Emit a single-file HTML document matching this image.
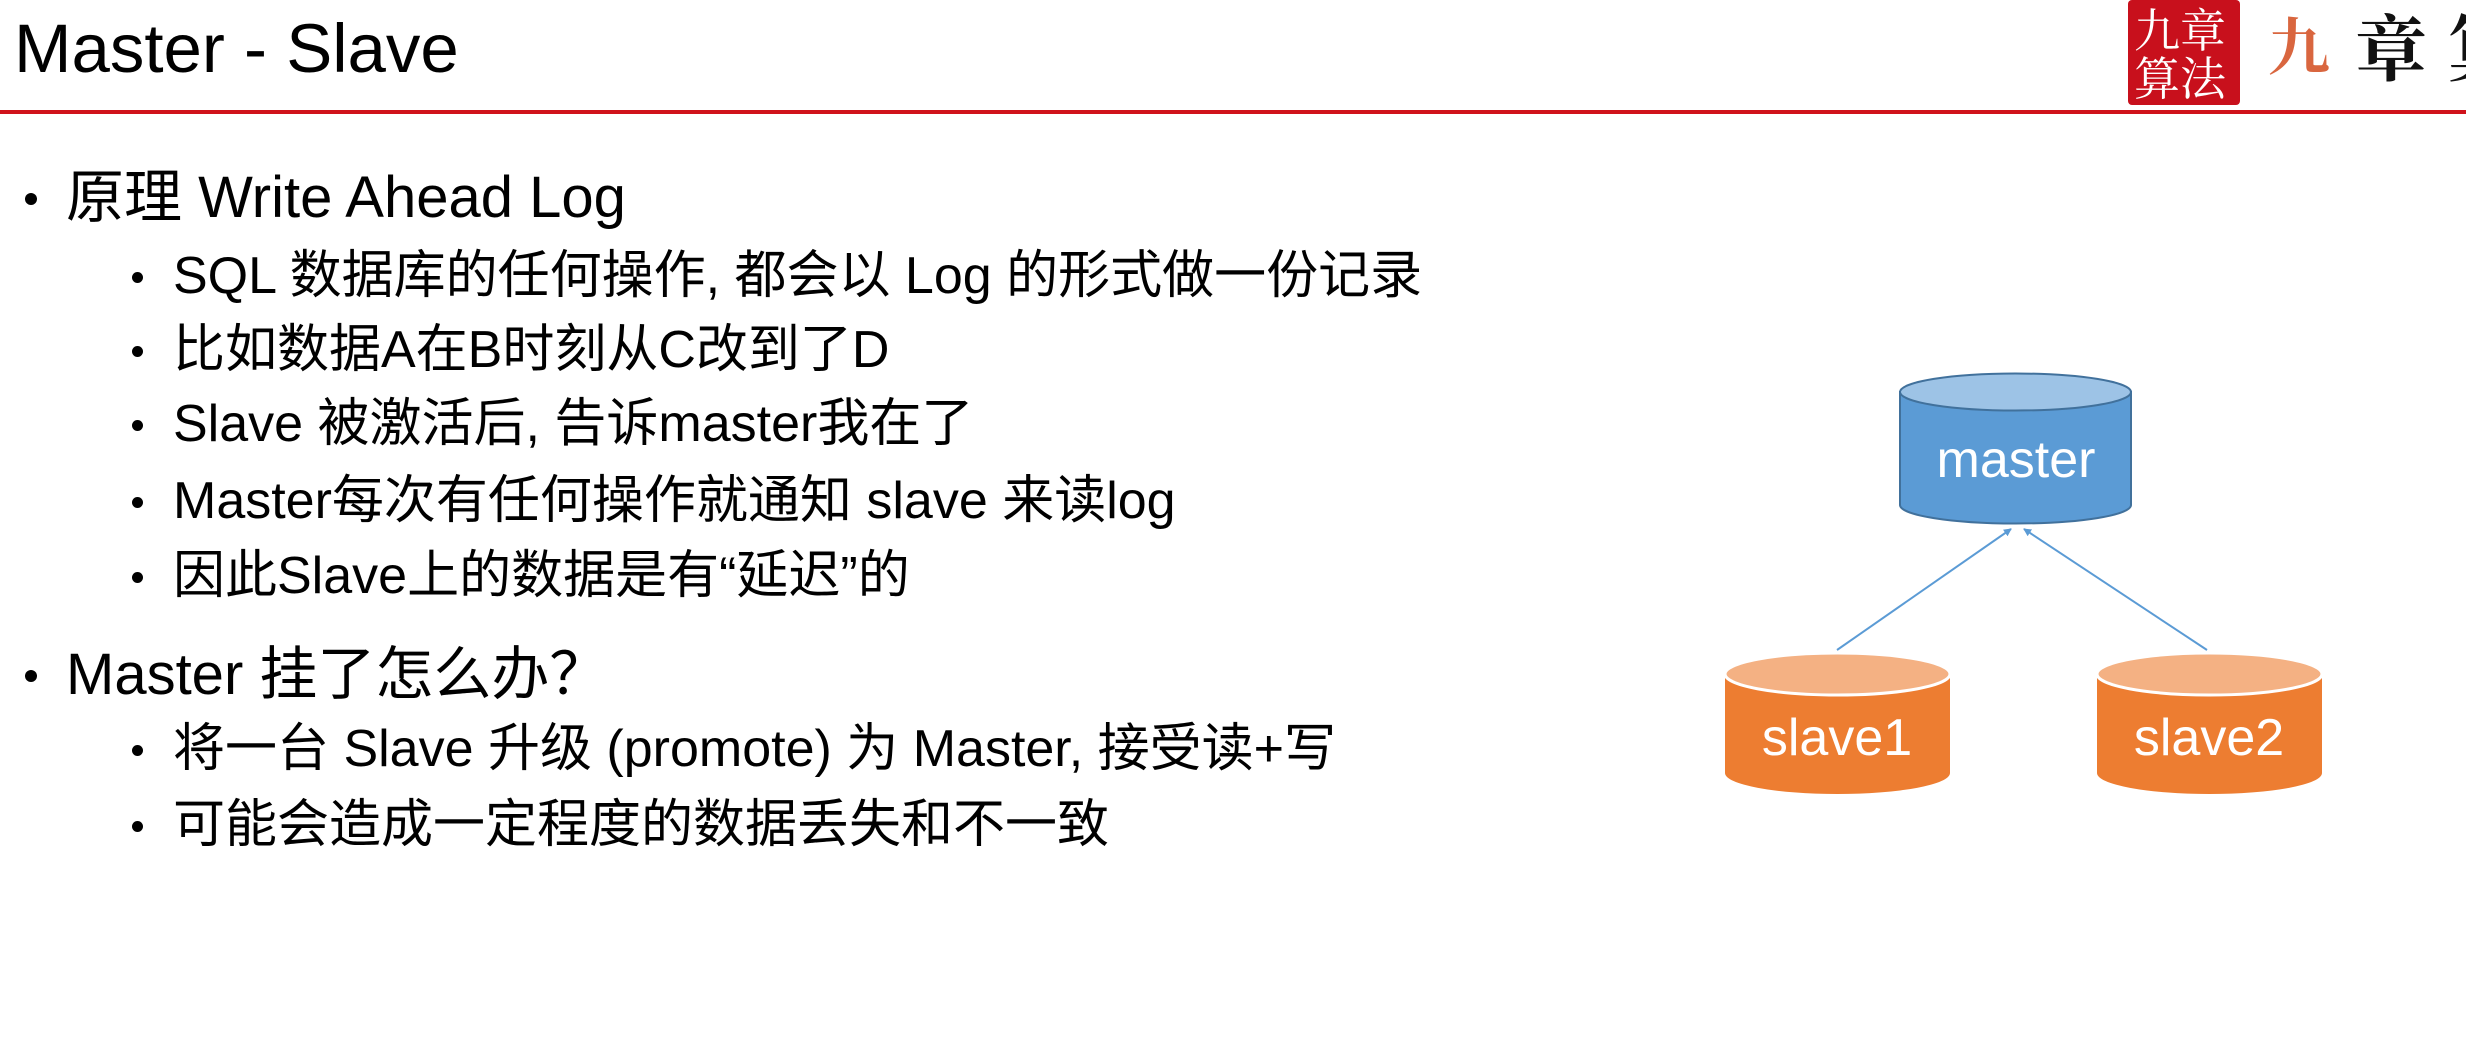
<!DOCTYPE html>
<html><head><meta charset="utf-8"><style>
html,body{margin:0;padding:0;background:#fff;}
body{width:2466px;height:1042px;position:relative;overflow:hidden;font-family:"Liberation Sans","Noto Sans CJK SC",sans-serif;color:#000;}
.t{position:absolute;white-space:nowrap;line-height:1;}
.title{left:14px;top:14px;font-size:69px;}
.l1{font-size:58px;left:66px;}
.l2{font-size:52px;left:173px;}
.b{position:absolute;border-radius:50%;background:#000;}
</style></head><body>
<div class="t title">Master - Slave</div>
<div style="position:absolute;left:0;top:110px;width:2466px;height:4px;background:#d0121b;"></div>

<div style="position:absolute;left:2128px;top:0;width:112px;height:105px;background:#c8101c;border-radius:4px;"></div>
<div class="t" style="left:2134px;top:4px;font-size:46px;color:#fff;font-family:'Noto Serif CJK SC',serif;line-height:48px;width:100px;">九章<br>算法</div>
<div class="t" style="left:2268px;top:12px;font-size:62px;color:#d9663f;font-family:'Noto Serif CJK SC',serif;font-weight:bold;">九</div>
<div class="t" style="left:2355px;top:8px;font-size:72px;color:#111;font-family:'Noto Serif CJK SC',serif;font-weight:bold;">章</div>
<div class="t" style="left:2448px;top:8px;font-size:72px;color:#111;font-family:'Noto Serif CJK SC',serif;font-weight:bold;">算</div>

<div class="b" style="left:25px;top:193px;width:12px;height:12px;"></div>
<div class="t l1" style="top:169px;">原理 Write Ahead Log</div>

<div class="b" style="left:132px;top:272px;width:11px;height:11px;"></div>
<div class="t l2" style="top:250px;">SQL 数据库的任何操作, 都会以 Log 的形式做一份记录</div>
<div class="b" style="left:132px;top:346px;width:11px;height:11px;"></div>
<div class="t l2" style="top:324px;">比如数据A在B时刻从C改到了D</div>
<div class="b" style="left:132px;top:420px;width:11px;height:11px;"></div>
<div class="t l2" style="top:398px;">Slave 被激活后, 告诉master我在了</div>
<div class="b" style="left:132px;top:497px;width:11px;height:11px;"></div>
<div class="t l2" style="top:475px;">Master每次有任何操作就通知 slave 来读log</div>
<div class="b" style="left:132px;top:572px;width:11px;height:11px;"></div>
<div class="t l2" style="top:550px;">因此Slave上的数据是有“延迟”的</div>

<div class="b" style="left:25px;top:670px;width:12px;height:12px;"></div>
<div class="t l1" style="top:646px;">Master 挂了怎么办？</div>
<div class="b" style="left:132px;top:745px;width:11px;height:11px;"></div>
<div class="t l2" style="top:723px;">将一台 Slave 升级 (promote) 为 Master, 接受读+写</div>
<div class="b" style="left:132px;top:821px;width:11px;height:11px;"></div>
<div class="t l2" style="top:799px;">可能会造成一定程度的数据丢失和不一致</div>

<svg width="2466" height="1042" style="position:absolute;left:0;top:0;" xmlns="http://www.w3.org/2000/svg">
<defs><marker id="ar" markerWidth="8" markerHeight="8" refX="7" refY="4" orient="auto" markerUnits="userSpaceOnUse"><path d="M0,0 L8,4 L0,8 z" fill="#5b9bd5"/></marker></defs>
<path d="M1900,392 L1900,505 A115.5,18.5 0 0 0 2131,505 L2131,392 Z" fill="#5b9bd5" stroke="#41719c" stroke-width="2"/>
<ellipse cx="2015.5" cy="392" rx="115.5" ry="18.5" fill="#9dc3e6" stroke="#41719c" stroke-width="2"/>
<text x="2016" y="477" font-size="52" fill="#fff" text-anchor="middle" font-family="Liberation Sans, sans-serif">master</text>
<line x1="1837" y1="650" x2="2011" y2="529" stroke="#5b9bd5" stroke-width="2" marker-end="url(#ar)"/>
<line x1="2207" y1="650" x2="2024" y2="529" stroke="#5b9bd5" stroke-width="2" marker-end="url(#ar)"/>
<path d="M1725,674 L1725,773 A112.5,21 0 0 0 1950,773 L1950,674 Z" fill="#ed7d31"/>
<ellipse cx="1837.5" cy="674" rx="112.5" ry="21" fill="#f4b183" stroke="#fff" stroke-width="3"/>
<text x="1837" y="755" font-size="52" fill="#fff" text-anchor="middle" font-family="Liberation Sans, sans-serif">slave1</text>
<path d="M2097,674 L2097,773 A112.5,21 0 0 0 2322,773 L2322,674 Z" fill="#ed7d31"/>
<ellipse cx="2209.5" cy="674" rx="112.5" ry="21" fill="#f4b183" stroke="#fff" stroke-width="3"/>
<text x="2209" y="755" font-size="52" fill="#fff" text-anchor="middle" font-family="Liberation Sans, sans-serif">slave2</text>
</svg>
</body></html>
